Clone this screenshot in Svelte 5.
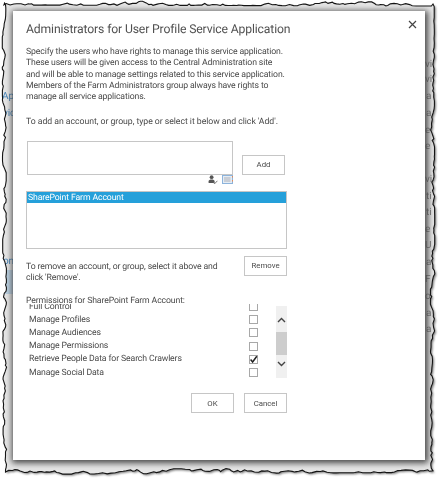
<script>
  const permissions = [
    { name: "Full Control", checked: false },
    { name: "Manage Profiles", checked: false },
    { name: "Manage Audiences", checked: false },
    { name: "Manage Permissions", checked: false },
    { name: "Retrieve People Data for Search Crawlers", checked: true },
    { name: "Manage Social Data", checked: false }
  ];

  // torn paper edge, seeded so it comes out the same every time
  let seed = 17;
  function rnd() {
    seed = (seed * 16807) % 2147483647;
    return seed / 2147483647;
  }

  function edge(x0, y0, x1, y1, swing) {
    const pts = [];
    const len = Math.hypot(x1 - x0, y1 - y0);
    const nx = (y1 - y0) / len;
    const ny = (x0 - x1) / len;
    let off = 0;
    let d = 0;
    while (d < len) {
      off = Math.max(-swing, Math.min(swing, off + (rnd() - 0.5) * 3.4));
      const x = x0 + ((x1 - x0) * d) / len + nx * off;
      const y = y0 + ((y1 - y0) * d) / len + ny * off;
      pts.push(x.toFixed(1) + " " + y.toFixed(1));
      d += 1.5 + rnd() * 3;
    }
    return pts;
  }

  const tornPath =
    "M" +
    [
      ...edge(4, 3, 432, 4, 2),
      ...edge(432, 4, 433, 470, 2.2),
      ...edge(433, 470, 5, 472, 2.4),
      ...edge(5, 472, 4, 3, 1.8)
    ].join("L") +
    "Z";

  const slivers = [
    { x: 2, y: 99, text: "App", blue: true },
    { x: 3, y: 116, text: "vice", blue: true },
    { x: 3, y: 264, text: "on", blue: true },
    { x: 425, y: 67, text: "vi" },
    { x: 425, y: 82, text: "vi" },
    { x: 426, y: 99, text: "a" },
    { x: 426, y: 116, text: "a" },
    { x: 425, y: 133, text: "e" },
    { x: 425, y: 149, text: "e" },
    { x: 425, y: 182, text: "vi" },
    { x: 426, y: 199, text: "ti" },
    { x: 426, y: 215, text: "ti" },
    { x: 425, y: 232, text: "e" },
    { x: 425, y: 248, text: "U" },
    { x: 426, y: 265, text: "a" },
    { x: 425, y: 282, text: "F" },
    { x: 425, y: 299, text: "op" },
    { x: 426, y: 316, text: "a" },
    { x: 426, y: 332, text: "a" }
  ];
</script>

<div class="page">
  <svg class="torn" width="443" height="480" viewBox="0 0 443 480" aria-hidden="true">
    <defs>
      <clipPath id="torn-clip"><path d={tornPath} /></clipPath>
      <filter id="soft" x="-10%" y="-10%" width="120%" height="120%">
        <feGaussianBlur stdDeviation="3.4" />
      </filter>
      <filter id="drop" x="-10%" y="-10%" width="120%" height="120%">
        <feGaussianBlur stdDeviation="1.2" />
      </filter>
    </defs>
    <path d={tornPath} fill="#777" filter="url(#drop)" transform="translate(1.5 1.5)" />
    <g clip-path="url(#torn-clip)">
      <rect width="443" height="480" fill="#e6e6e6" />
      <rect x="0" y="270" width="13" height="24" fill="#b9cfe0" />
      {#each slivers as s}
        <text x={s.x} y={s.y} class:blue={s.blue} class="sliver">{s.text}</text>
      {/each}
      <rect x="12" y="11" width="416" height="452" fill="#444" filter="url(#soft)" />
    </g>
    <path d={tornPath} fill="none" stroke="#141414" stroke-width="1.1" />
  </svg>

  <div class="dialog">
    <button class="close" aria-label="Close">
      <svg width="9" height="9" viewBox="0 0 9 9">
        <path d="M1 1l7 7M8 1L1 8" stroke="#444" stroke-width="1.2" fill="none" />
      </svg>
    </button>

    <h1>Administrators for User Profile Service Application</h1>

    <p class="intro">
      Specify the users who have rights to manage this service application.<br />
      These users will be given access to the Central Administration site<br />
      and will be able to manage settings related to this service application.<br />
      Members of the Farm Administrators group always have rights to<br />
      manage all service applications.
    </p>

    <p class="add-hint">To add an account, or group, type or select it below and click 'Add'.</p>

    <div class="add-row">
      <div class="people-box"></div>
      <button class="btn">Add</button>
    </div>

    <div class="picker-icons">
      <svg width="10" height="10" viewBox="0 0 10 10">
        <circle cx="3.6" cy="2.2" r="1.9" fill="#555" />
        <path d="M0.6 8V6.4C0.6 5 2 4.4 3.6 4.4S6.6 5 6.6 6.4V8Z" fill="#555" />
        <path d="M5.2 7.2l1.4 1.6L9.4 5.8" stroke="#666" stroke-width="0.9" fill="none" />
      </svg>
      <svg width="11" height="9" viewBox="0 0 11 9">
        <rect x="0.5" y="0.5" width="10" height="8" fill="#e4ecf4" stroke="#8db4dc" />
        <rect x="2" y="2" width="6.5" height="5" fill="#c9ced6" />
        <path d="M10.5 1v1.5M10.5 5v1.5" stroke="#e08a5a" />
      </svg>
    </div>

    <div class="account-list">
      <div class="account selected">SharePoint Farm Account</div>
    </div>

    <div class="remove-row">
      <p>To remove an account, or group, select it above and click 'Remove'.</p>
      <button class="btn">Remove</button>
    </div>

    <p class="perm-label">Permissions for SharePoint Farm Account:</p>

    <div class="perm-wrap">
      <div class="perm-list">
        {#each permissions as perm}
          <div class="perm">
            <span class="perm-name">{perm.name}</span>
            <span class="box">
              {#if perm.checked}
                <svg width="9" height="9" viewBox="0 0 9 9">
                  <path d="M1.6 4.6L3.6 7 7.8 1.2" stroke="#222" stroke-width="1.5" fill="none" />
                </svg>
              {/if}
            </span>
          </div>
        {/each}
      </div>
      <div class="scrollbar">
        <svg class="up" width="9" height="6" viewBox="0 0 9 6">
          <path d="M1 5l3.5-3.5L8 5" stroke="#444" stroke-width="1.4" fill="none" />
        </svg>
        <div class="thumb"></div>
        <svg class="down" width="9" height="6" viewBox="0 0 9 6">
          <path d="M1 1l3.5 3.5L8 1" stroke="#444" stroke-width="1.4" fill="none" />
        </svg>
      </div>
    </div>

    <div class="footer">
      <button class="btn">OK</button>
      <button class="btn">Cancel</button>
    </div>
  </div>
</div>

<style>
  :global(body) {
    margin: 0;
    background: #fff;
  }

  .page {
    position: relative;
    width: 443px;
    height: 480px;
    overflow: hidden;
    box-sizing: border-box;
    padding: 11px 18px 20px 13px;
    font-family: Roboto, "Liberation Sans", sans-serif;
    font-size: 8.7px;
    letter-spacing: -0.13px;
    text-rendering: geometricPrecision;
    color: #4a4a4a;
    filter: blur(0.3px);
  }

  .torn {
    position: absolute;
    left: 0;
    top: 0;
  }

  .sliver {
    font-size: 10px;
    fill: #777;
  }

  .sliver.blue {
    fill: #3f7fb5;
  }

  .dialog {
    position: relative;
    width: 412px;
    height: 449px;
    box-sizing: border-box;
    padding: 7px 0 0 13px;
    background: #fff;
  }

  .close {
    position: absolute;
    right: 8px;
    top: 9px;
    width: 9px;
    height: 9px;
    padding: 0;
    border: 0;
    background: none;
    line-height: 0;
  }

  h1 {
    margin: 0;
    font-size: 12.2px;
    font-weight: 400;
    letter-spacing: -0.14px;
    line-height: 22px;
    color: #505050;
  }

  p {
    margin: 0;
  }

  .intro {
    margin-top: 7px;
    line-height: 11.3px;
  }

  .add-hint {
    margin-top: 13.5px;
    line-height: 11.3px;
    letter-spacing: -0.04px;
  }

  .add-row {
    display: flex;
    align-items: flex-end;
    gap: 9px;
    margin: 12.5px 0 0 1px;
  }

  .people-box {
    width: 206px;
    height: 34px;
    box-sizing: border-box;
    border: 1px solid #c6c6c6;
  }

  .picker-icons {
    display: flex;
    justify-content: flex-end;
    align-items: center;
    gap: 4px;
    width: 207px;
    height: 16px;
    padding-bottom: 6px;
    box-sizing: border-box;
  }

  .account-list {
    width: 261px;
    height: 58px;
    box-sizing: border-box;
    border: 1px solid #c6c6c6;
  }

  .account {
    height: 11px;
    line-height: 12px;
    padding-left: 1px;
  }

  .account.selected {
    background: #25a0da;
    color: #fff;
  }

  .remove-row {
    display: flex;
    justify-content: space-between;
    align-items: flex-start;
    width: 261px;
    margin-top: 7px;
  }

  .remove-row p {
    width: 205px;
    margin-top: 6px;
    line-height: 11.3px;
  }

  .perm-label {
    margin-top: 11.5px;
    line-height: 11.3px;
  }

  .perm-wrap {
    display: flex;
    align-items: flex-start;
    width: 261px;
    height: 74px;
    margin-top: -3px;
  }

  .perm-list {
    width: 250px;
    height: 74px;
    overflow: hidden;
  }

  .perm {
    display: flex;
    align-items: center;
    justify-content: space-between;
    height: 13.2px;
    margin-left: 3px;
    width: 229px;
    position: relative;
    top: -4.2px;
  }

  .box {
    display: block;
    width: 9px;
    height: 9px;
    box-sizing: border-box;
    border: 1px solid #a8a8a8;
    line-height: 0;
  }

  .box svg {
    margin: -1px;
  }

  .scrollbar {
    position: relative;
    width: 11px;
    height: 72px;
    margin-top: 2px;
    background: #f0f0f0;
  }

  .thumb {
    position: absolute;
    left: 0;
    right: 0;
    top: 26px;
    height: 23px;
    background: #cdcdcd;
  }

  .up,
  .down {
    position: absolute;
    left: 1px;
  }

  .up {
    top: 11px;
  }

  .down {
    top: 55px;
  }

  .footer {
    display: flex;
    justify-content: flex-end;
    gap: 10px;
    width: 261px;
    margin-top: 15px;
  }

  .btn {
    width: 43px;
    height: 20px;
    padding: 0;
    box-sizing: border-box;
    border: 1px solid #c6c6c6;
    background: #fff;
    font: inherit;
    font-size: 7.8px;
    color: #4a4a4a;
  }
</style>
